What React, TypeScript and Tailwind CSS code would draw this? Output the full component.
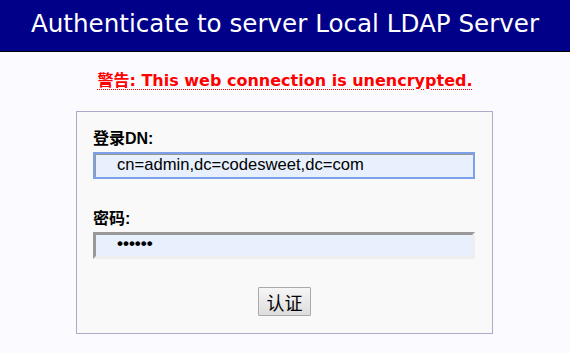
import React from "react";

export default function App() {
  return (
    <div className="min-h-[353px] bg-[#fbfbff]">
      <div className="h-[52px] bg-[#000088] border-b border-black flex items-center justify-center">
        <h1 className="text-white text-[24.6px] font-['DejaVu_Sans',sans-serif] leading-none pb-[2px]">
          Authenticate to server Local LDAP Server
        </h1>
      </div>
      <div className="flex justify-center pt-[19px] h-[59px]">
        <span className="text-[#ff0000] font-bold text-[16px] leading-[20px] font-['DejaVu_Sans','Noto_Sans_CJK_SC',sans-serif] underline decoration-dotted decoration-[1px] underline-offset-[3px]">
          警告: This web connection is unencrypted.
        </span>
      </div>
      <div className="ml-[76px] w-[417px] h-[223px] border border-[#aaaacc] bg-[#f9f9f9] px-[16px] pt-[17px] font-['Liberation_Sans','Noto_Sans_CJK_SC',sans-serif]">
        <div className="text-[16px] font-bold text-black leading-[20px] h-[23px]">登录DN:</div>
        <div className="h-[27px] w-[382px] border-2 border-[#7ba2e8] bg-[#e8f0fe] flex items-center pl-[22px] text-[16.6px] text-black shadow-[inset_1px_1px_0_#999]">
          cn=admin,dc=codesweet,dc=com
        </div>
        <div className="text-[16px] font-bold text-black leading-[20px] h-[23px] mt-[30px]">密码:</div>
        <div className="h-[27px] w-[382px] border-[3px] border-t-[#999999] border-l-[#999999] border-r-[#eeeeee] border-b-[#eeeeee] bg-[#e8f0fe] flex items-center pl-[21px] text-[16px] text-black leading-none">
          <span className="text-[17px] font-bold pb-[4px]">••••••</span>
        </div>
        <div className="flex justify-center mt-[28px]">
          <button className="w-[53px] h-[29px] border border-[#aaaaaa] bg-gradient-to-b from-[#f6f6f6] to-[#dddddd] text-[18px] text-black font-['Noto_Sans_CJK_SC',sans-serif] leading-none rounded-[1px]">
            认证
          </button>
        </div>
      </div>
    </div>
  );
}
